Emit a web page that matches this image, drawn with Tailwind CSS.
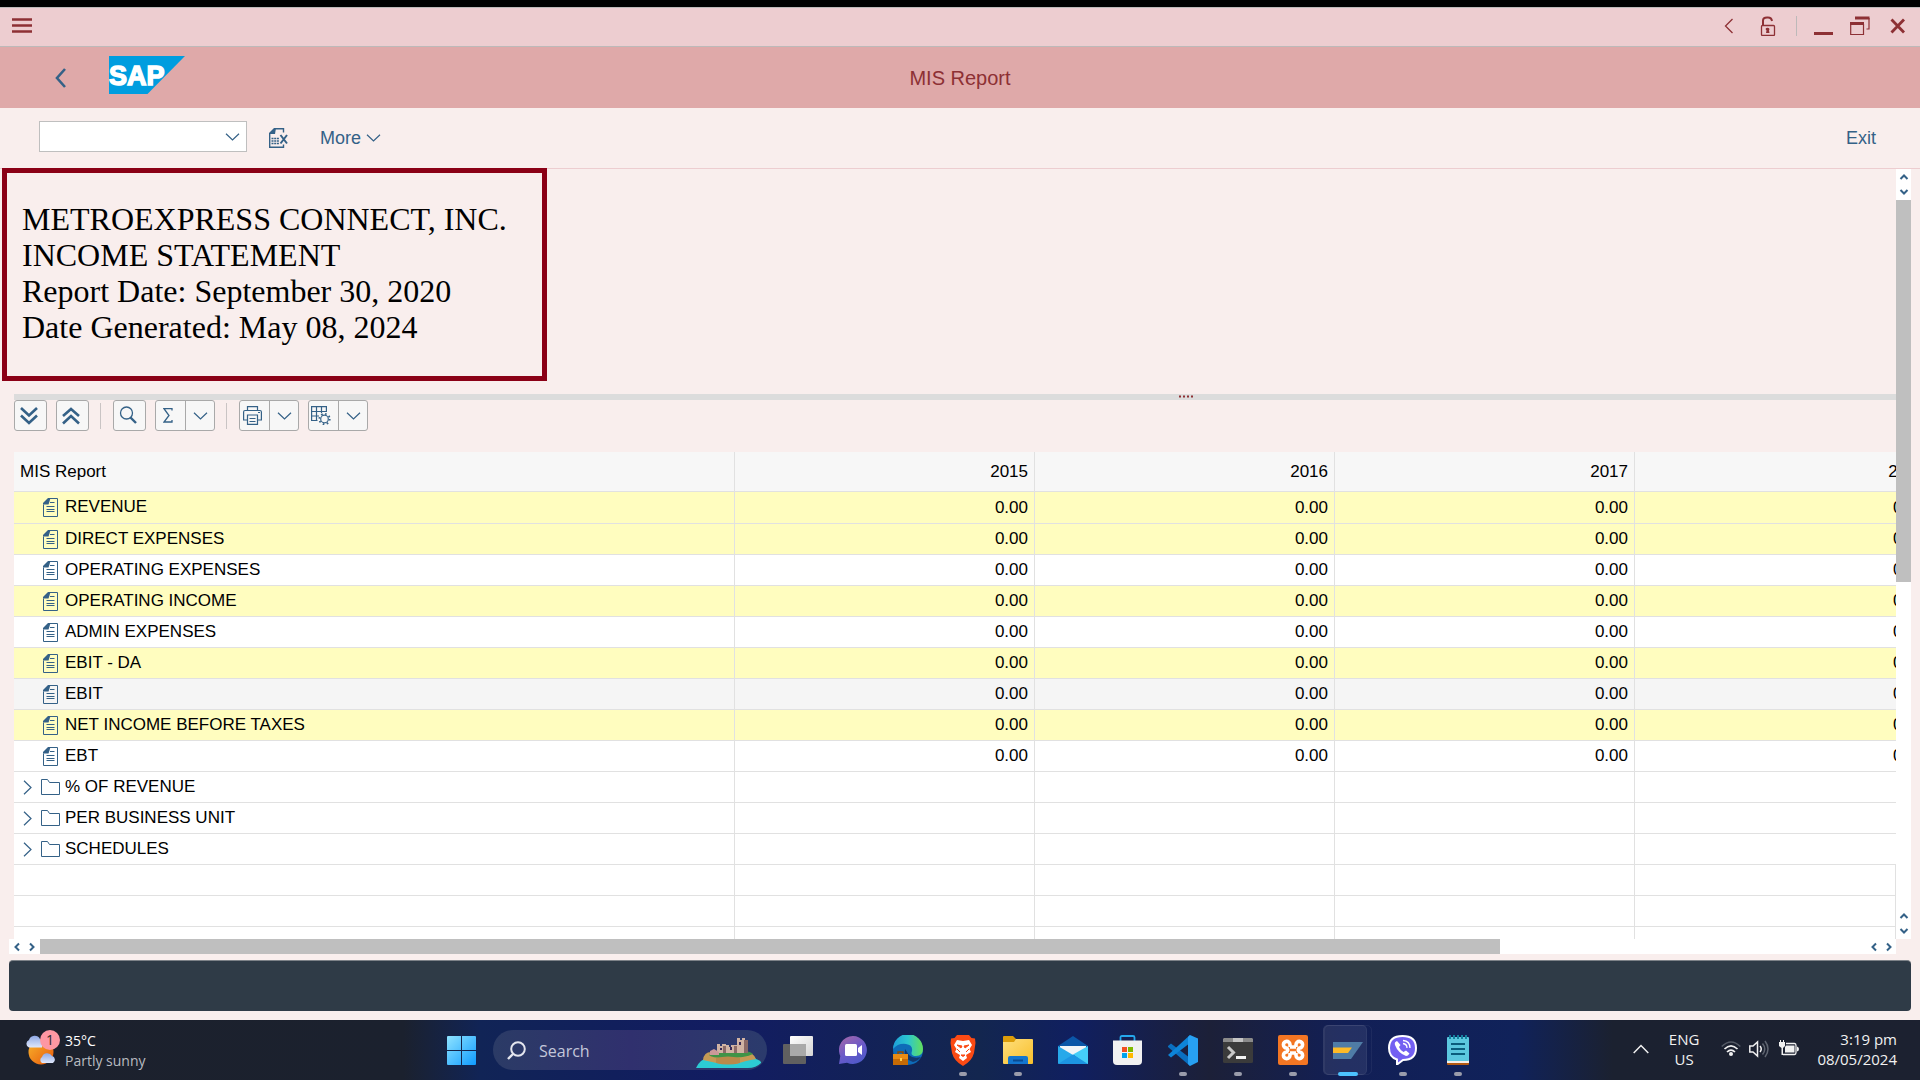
<!DOCTYPE html>
<html lang="en">
<head>
<meta charset="utf-8">
<title>MIS Report</title>
<script src="https://cdn.jsdelivr.net/npm/@tailwindcss/browser@4"></script>
</head>
<body class="flex h-screen flex-col overflow-hidden bg-[#f9eeed] font-['Liberation_Sans',Arial,sans-serif] text-[17px] text-black">

<svg class="hidden">
  <symbol id="doc" viewBox="0 0 15 19"><path d="M.5 6.5V18.500h14V.5H6.500" fill="none" stroke="#346187"/><path d="M0 6.500V5L5 0H7.500L6 5L5.500 6.500Z" fill="#346187"/><path d="M7 4.500H11.500M3.500 8.500H11.500M3.500 11.500H11.500M3.500 13.500H11.500" stroke="#346187"/></symbol>
  <symbol id="folder" viewBox="0 0 19 16"><path d="M.5.5H6.500L8.500 3.500H18.500V15.500H.5Z" fill="none" stroke="#346187"/></symbol>
  <symbol id="down" viewBox="0 0 14 8"><path d="M.5 .7L7 7L13.500 .7" fill="none" stroke="currentColor" stroke-width="1.200"/></symbol>
  <symbol id="tiny" viewBox="0 0 10 6"><path d="M1.500 5L5 1.500L8.500 5" fill="none" stroke="#346187" stroke-width="2"/></symbol>
</svg>

<header class="shrink-0">
  <div class="h-[7px] bg-black"></div>
  <div class="flex h-10 items-center justify-between border-y border-[#bdb9b9] bg-[#edcdd0] pr-[14px] pb-[2px] pl-3 text-[#8d3034]">
    <button aria-label="Menu"><svg class="h-4 w-5" viewBox="0 0 20 16"><path d="M0 1.500H20M0 7.500H20M0 13.500H20" stroke="currentColor" stroke-width="2.400"/></svg></button>
    <div class="flex items-center">
      <button aria-label="Previous" class="mr-[26px]"><svg class="h-4 w-[10px]" viewBox="0 0 10 16"><path d="M8.500 1L1.500 8L8.500 15" fill="none" stroke="currentColor" stroke-width="1.300"/></svg></button>
      <button aria-label="Unlock" class="mr-5"><svg class="h-5 w-4" viewBox="0 0 16 20"><path d="M3 10V4.500Q3 1.500 7 1.500H8Q11.500 1.500 12 5" fill="none" stroke="currentColor" stroke-width="2"/><rect x="1.500" y="9.500" width="13" height="10" rx="1" fill="none" stroke="currentColor" stroke-width="1.300"/><path d="M5.500 13A2.200 2.200 0 0 1 9.500 13L9 14.500L9.500 17H6L6.500 14.500Z" fill="currentColor"/></svg></button>
      <span class="mr-[17px] h-5 w-px bg-[#bdb9b9]"></span>
      <button aria-label="Minimize" class="mr-[17px]"><svg class="h-5 w-[19px]" viewBox="0 0 19 20"><path d="M0 17.500H19" stroke="currentColor" stroke-width="3"/></svg></button>
      <button aria-label="Restore" class="mr-5"><svg class="h-5 w-[20px]" viewBox="0 0 20 20"><path d="M.7 8V18.500H13.500V8M19 2V13H16.500" fill="none" stroke="currentColor" stroke-width="1.200"/><path d="M0 7.500H14M5 2H19.500" stroke="currentColor" stroke-width="3"/></svg></button>
      <button aria-label="Close"><svg class="h-4 w-4" viewBox="0 0 16 16"><path d="M1.500 1.500L14 14.500M14 1.500L1.500 14.500" stroke="currentColor" stroke-width="2.800"/></svg></button>
    </div>
  </div>
  <div class="grid h-[61px] grid-cols-[1fr_auto_1fr] items-center bg-[#dfa9a9] px-[55px]">
    <div class="-mt-1 flex items-center gap-[42px]">
      <button aria-label="Back" class="pt-1"><svg class="h-5 w-3" viewBox="0 0 12 20"><path d="M10 1L2 10L10 19" fill="none" stroke="#346187" stroke-width="2.600"/></svg></button>
      <svg class="-mt-[2px] h-[38px] w-[76px]" viewBox="0 0 76 38" role="img" aria-label="SAP"><path d="M0 0H76L38.500 38H0Z" fill="#009ddf"/><text x="0" y="29" font-family="Liberation Sans" font-weight="700" font-size="27" fill="#fff" stroke="#fff" stroke-width="1.500">SAP</text></svg>
    </div>
    <h1 class="text-[20px] text-[#8d3034]">MIS Report</h1>
  </div>
  <div class="flex h-[61px] items-center border-b border-[#edcdd0] pr-11 pl-[39px] text-[18px] text-[#346187]">
    <div class="relative mb-[3px]">
      <select aria-label="Command" class="block h-[31px] w-[208px] appearance-none border border-[#bfbfbf] bg-white"><option></option></select>
      <svg class="pointer-events-none absolute top-3 right-[7px] h-2 w-[15px]"><use href="#down"/></svg>
    </div>
    <button aria-label="Export to spreadsheet" class="ml-[22px]"><svg class="h-5 w-[19px]" viewBox="0 0 19 20"><path d="M.7 6V19.200H14.500V16.500M6 .7H14.500V4.500" fill="none" stroke="#346187" stroke-width="1.400"/><path d="M0 6V5L5 0H7L6 6Z" fill="#346187"/><path d="M2.500 10.500H10M2.500 13H10M2.500 15.500H10" stroke="#346187" stroke-width="1.500" stroke-dasharray="2 .7"/><path d="M11.500 7L18 15.500M18 7L11.500 15.500" stroke="#346187" stroke-width="2"/></svg></button>
    <button class="ml-8 flex items-center gap-[5px]">More <svg class="h-2 w-[15px]"><use href="#down"/></svg></button>
    <button class="ml-auto">Exit</button>
  </div>
</header>

<main class="flex min-h-0 flex-1 flex-col px-[9px] pb-[9px]">
  <div class="flex min-h-0 flex-1">
    <div class="flex min-w-0 flex-1 flex-col">
      <div class="flex min-h-0 flex-1 flex-col pl-[5px]">
        <section class="-mt-px -ml-3 h-[213px] w-[545px] shrink-0 border-[5px] border-[#8b0016] pt-7 pl-[15px] font-['Liberation_Serif',serif] text-[32px] leading-[36px] whitespace-nowrap">
          <p>METROEXPRESS CONNECT, INC.</p>
          <p>INCOME STATEMENT</p>
          <p>Report Date: September 30, 2020</p>
          <p>Date Generated: May 08, 2024</p>
        </section>
        <div class="mt-[13px] flex h-[6px] shrink-0 items-start justify-center bg-[#dcdcdc] pt-px pl-[464px]">
          <svg class="h-[3px] w-4" viewBox="0 0 16 3"><path d="M0 1.500H16" stroke="#8d3034" stroke-width="2" stroke-dasharray="2"/></svg>
        </div>
        <div class="flex h-[31px] shrink-0 items-center text-[#346187]">
          <button aria-label="Expand all" class="grid h-[31px] w-[33px] place-items-center rounded-[3px] border border-[#a9a9a9] bg-[#f7f7f7] pr-[3px]"><svg class="h-[18px] w-[18px]" viewBox="0 0 18 18"><path d="M1 1L9 8.500L17 1M1 8.500L9 16L17 8.500" fill="none" stroke="currentColor" stroke-width="2.600"/></svg></button>
          <button aria-label="Collapse all" class="ml-[9px] grid h-[31px] w-[33px] place-items-center rounded-[3px] border border-[#a9a9a9] bg-[#f7f7f7] pr-[3px]"><svg class="h-[18px] w-[18px]" viewBox="0 0 18 18"><path d="M1 9L9 2L17 9M1 16.500L9 9L17 16.500" fill="none" stroke="currentColor" stroke-width="2.600"/></svg></button>
          <span class="mr-3 ml-[11px] h-[26px] w-px bg-[#c9c4c4]"></span>
          <button aria-label="Find" class="grid h-[31px] w-[33px] place-items-center rounded-[3px] border border-[#a9a9a9] bg-[#f7f7f7] pr-[3px] pb-[2px]"><svg class="h-[18px] w-[18px]" viewBox="0 0 18 18"><circle cx="7.500" cy="7" r="6" fill="none" stroke="currentColor" stroke-width="1.300"/><path d="M11.500 11.500L17 17" stroke="currentColor" stroke-width="2.400"/></svg></button>
          <div class="ml-[9px] flex h-[31px] w-[60px] rounded-[3px] border border-[#a9a9a9] bg-[#f7f7f7]">
            <button aria-label="Total" class="grid w-[30px] place-items-center border-r border-[#a9a9a9] pr-[5px]"><svg class="h-[15px] w-[10px]" viewBox="0 0 10 15"><path d="M9 2.500V.7H1L6 7.500L1 14H9V12" fill="none" stroke="currentColor" stroke-width="1.300"/></svg></button>
            <button aria-label="Total options" class="grid flex-1 place-items-center"><svg class="h-2 w-[15px]"><use href="#down"/></svg></button>
          </div>
          <span class="mr-3 ml-[11px] h-[26px] w-px bg-[#c9c4c4]"></span>
          <div class="flex h-[31px] w-[60px] rounded-[3px] border border-[#a9a9a9] bg-[#f7f7f7]">
            <button aria-label="Print" class="grid w-[30px] place-items-center border-r border-[#a9a9a9] pr-[5px]"><svg class="h-[19px] w-[19px]" viewBox="0 0 19 19" fill="none" stroke="currentColor" stroke-width="1.200"><path d="M4.500 4.500V.6H14.500V4.500M4 14H.6V6Q.6 4.500 2 4.500H17Q18.400 4.500 18.400 6V14H15"/><path d="M4.500 9H14.500V18.400H4.500ZM6.500 12.500H12.500M6.500 15.500H12.500M15 6.500H17"/></svg></button>
            <button aria-label="Print options" class="grid flex-1 place-items-center"><svg class="h-2 w-[15px]"><use href="#down"/></svg></button>
          </div>
          <div class="ml-[9px] flex h-[31px] w-[60px] rounded-[3px] border border-[#a9a9a9] bg-[#f7f7f7]">
            <button aria-label="Layout" class="grid w-[30px] place-items-center border-r border-[#a9a9a9] pr-[5px]"><svg class="h-[19px] w-[20px]" viewBox="0 0 20 19" fill="none" stroke="currentColor" stroke-width="1.200"><path d="M6.500 14.500H.6V.6H15.400V6M.6 5.500H15.400M.6 10H8M5.500 .6V14.500M10.500 .6V7"/><circle cx="13.500" cy="13" r="3.800"/><circle cx="13.500" cy="13" r="5.200" stroke-width="1.800" stroke-dasharray="1.600 2.480"/></svg></button>
            <button aria-label="Layout options" class="grid flex-1 place-items-center"><svg class="h-2 w-[15px]"><use href="#down"/></svg></button>
          </div>
        </div>
        <div class="mt-[21px] min-h-0 flex-1 overflow-hidden bg-white">
          <table class="w-[1921px] table-fixed border-separate border-spacing-0">
            <colgroup><col class="w-[721px]"><col class="w-[300px]"><col class="w-[300px]"><col class="w-[300px]"><col class="w-[300px]"></colgroup>
            <thead id="head" class="bg-[#f7f7f7]"></thead>
            <tbody id="rows"></tbody>
          </table>
          <div id="blank"></div>
        </div>
      </div>
      <div class="flex h-[15px] shrink-0 items-center bg-white">
        <div class="flex w-[31px] justify-around">
          <svg class="h-[6px] w-[10px] -rotate-90"><use href="#tiny"/></svg><svg class="h-[6px] w-[10px] rotate-90"><use href="#tiny"/></svg>
        </div>
        <div class="flex-1"><div class="h-[15px] w-[80%] bg-[#bfbfbf]"></div></div>
        <div class="flex w-[31px] justify-around pl-px">
          <svg class="h-[6px] w-[10px] -rotate-90"><use href="#tiny"/></svg><svg class="h-[6px] w-[10px] rotate-90"><use href="#tiny"/></svg>
        </div>
      </div>
    </div>
    <div class="mb-[15px] flex w-[15px] flex-col items-center bg-white">
      <div class="flex h-[31px] flex-col items-center justify-around">
        <svg class="h-[6px] w-[10px]"><use href="#tiny"/></svg><svg class="h-[6px] w-[10px] rotate-180"><use href="#tiny"/></svg>
      </div>
      <div class="w-full flex-1"><div class="h-[54%] bg-[#bfbfbf]"></div></div>
      <div class="flex h-[31px] flex-col items-center justify-around">
        <svg class="h-[6px] w-[10px]"><use href="#tiny"/></svg><svg class="h-[6px] w-[10px] rotate-180"><use href="#tiny"/></svg>
      </div>
    </div>
  </div>
  <div role="status" class="mt-[6px] h-[51px] shrink-0 rounded-[4px] border-t border-[#7d8288] bg-[#2f3b47]"></div>
</main>

<footer class="grid h-[60px] shrink-0 grid-cols-[1fr_auto_1fr] items-center bg-[linear-gradient(90deg,#1c212d_0%,#1b212e_21%,#112456_25%,#111f5c_32%,#121c62_38%,#13264f_51%,#101f60_56%,#1c2038_63%,#121f56_70%,#10225a_79%,#1b2130_84%,#1c2130_100%)] font-['Open_Sans',sans-serif] text-[15px] leading-5 text-white">
  <button class="flex items-center gap-1 pl-[26px] text-left text-[14px]">
    <svg class="-mt-1 h-9 w-[35px]" viewBox="0 0 35 36">
      <defs><linearGradient id="sun" x2="1" y2="1"><stop stop-color="#f8b52c"/><stop offset="1" stop-color="#e8590c"/></linearGradient><linearGradient id="cl" x2="0" y2="1"><stop stop-color="#8fa9e6"/><stop offset="1" stop-color="#dfe8fb"/></linearGradient></defs>
      <circle cx="15" cy="22" r="12.500" fill="url(#sun)"/><path d="M3 17.500A4 4 0 0 1 3 10A6 6 0 0 1 14 9Q17 12 16 17.500Z" fill="url(#cl)"/><path d="M16 33A3.500 3.500 0 0 1 16 27A5.500 5.500 0 0 1 26 26A3.800 3.800 0 0 1 27 33Z" fill="url(#cl)"/>
      <circle cx="24" cy="10" r="10" fill="#fd97a3"/><text x="20" y="15" font-size="14" font-family="Open Sans" fill="#2b2b2b">1</text>
    </svg>
    <span class="pt-px">35°C<br><span class="text-[#b9bcc1]">Partly sunny</span></span>
  </button>

  <div class="flex items-center">
    <button aria-label="Start" class="grid h-[52px] w-[55px] place-items-center pr-[2px]"><svg class="h-[29px] w-[29px]" viewBox="0 0 29 29"><defs><linearGradient id="win" x2="1" y2="1"><stop stop-color="#8fe3ff"/><stop offset="1" stop-color="#0f9bff"/></linearGradient></defs><path d="M0 1Q0 0 1 0H14V14H0ZM15 0H28Q29 0 29 1V14H15ZM0 15H14V29H1Q0 29 0 28ZM15 15H29V28Q29 29 28 29H15Z" fill="url(#win)"/></svg></button>
    <div class="relative mx-[3px] h-10 w-[274px] overflow-hidden rounded-full bg-linear-to-r from-[#2b3b66] via-[#30306e] to-[#2b3b6c]">
      <svg class="absolute top-[11px] left-[14px] h-[19px] w-[19px]" viewBox="0 0 19 19"><circle cx="11" cy="8" r="6.800" fill="none" stroke="#e4e6ee" stroke-width="2"/><path d="M6 13L1 18" stroke="#e4e6ee" stroke-width="2.400"/></svg>
      <input type="text" aria-label="Search" placeholder="Search" class="block h-10 w-full bg-transparent pt-px pl-[46px] text-[16px] text-white placeholder-[#c3c7da]">
      <svg class="pointer-events-none absolute top-2 right-[6px] h-[30px] w-[65px]" viewBox="0 0 65 30"><path d="M0 30Q4 21 12 20H58Q66 23 65 25Q60 30 52 30Z" fill="#2ccbd3"/><path d="M7 22Q8 14 15 14H50Q58 15 60 21L50 23L40 26H25Z" fill="#c59a55"/><path d="M13 17Q20 13 35 13Q52 11 57 16Q50 20 30 20Q15 20 13 17Z" fill="#3f9447"/><path d="M20 20Q32 17 44 20V25Q32 28 20 25Z" fill="#b98a4a"/><path d="M21 6H24V8H26V6H30V15H21ZM30 7H33V9H35V7H41V15H30ZM41 0H44V2H46V0H49V2H52V15H41Z" fill="#d1b3a3"/><path d="M27 8H30V15H27ZM38 8H41V15H38ZM48 2H52V15H48Z" fill="#8c6a67"/><path d="M14 13L18 11L23 14V17H14Z" fill="#c99"/><path d="M43 4H45V7H43ZM34 9H36V12H34ZM24 10H26V12H24Z" fill="#3b2b57"/></svg>
    </div>
    <button aria-label="Task view" class="grid h-[52px] w-[55px] place-items-center"><svg class="h-[28px] w-[30px]" viewBox="0 0 30 28"><defs><linearGradient id="tv" x2="1" y2="1"><stop stop-color="#fff"/><stop offset="1" stop-color="#d4d4d4"/></linearGradient></defs><rect y="8" width="23" height="20" rx="1" fill="#606060"/><rect x="7" width="23" height="20" rx="1" fill="url(#tv)"/><path d="M7 8H23V20H7Z" fill="#a9a9a9"/></svg></button>
    <button aria-label="Chat" class="grid h-[52px] w-[55px] place-items-center"><svg class="h-[28px] w-[28px]" viewBox="0 0 28 28"><defs><linearGradient id="ch" x2=".6" y2="1"><stop stop-color="#a968a6"/><stop offset=".6" stop-color="#6a5ac9"/><stop offset="1" stop-color="#5059c9"/></linearGradient></defs><path d="M14 0A14 14 0 1 1 8 26.700L0 28L1.300 20A14 14 0 0 1 14 0Z" fill="url(#ch)"/><rect x="6" y="8" width="12" height="12" rx="1.500" fill="#fff"/><path d="M19 12L23 9V19L19 16Z" fill="#fff"/></svg></button>
    <button aria-label="Edge" class="grid h-[52px] w-[55px] place-items-center"><svg class="h-[30px] w-[30px]" viewBox="0 0 30 30"><defs><linearGradient id="ed"><stop stop-color="#1d9ed9"/><stop offset=".5" stop-color="#2cc6cf"/><stop offset="1" stop-color="#64e05a"/></linearGradient></defs><circle cx="15" cy="15" r="15" fill="#0e6bb8"/><path d="M0 14A15 15 0 0 1 30 14Q30 21 23 21Q17 21 19 16Q20 10 13 9Q5 8 0 14Z" fill="url(#ed)"/><path d="M12 14Q10 24 20 27Q25 26 28 22Q20 24 16 20Z" fill="#12386e"/><rect y="19" width="15" height="11" fill="#c66a05"/><path d="M0 19H15V24H0Z" fill="#e88b14"/><path d="M5 19V17H10V19" fill="none" stroke="#8d4a06" stroke-width="1.500"/><path d="M7 23H9V26H7Z" fill="#ffd04d"/></svg></button>
    <button aria-label="Brave" class="relative grid h-[52px] w-[55px] place-items-center"><svg class="h-[31px] w-[26px]" viewBox="0 0 26 31"><path d="M7 0H19L21.500 3L25 3.500L25.500 8L24 18Q22 26 13 31Q4 26 2 18L.5 8L1 3.500L4.500 3Z" fill="#fb4a14"/><path d="M7 5L13 6L19 5L22 10L19.500 14L21 17L16 20L17 23L13 26L9 23L10 20L5 17L6.500 14L4 10Z" fill="#fff"/><path d="M7 10L12 11L11 13ZM19 10L14 11L15 13ZM11 20H15L13 21.500ZM7 14L10 17M19 14L16 17" fill="#fb4a14" stroke="#fb4a14"/></svg><span class="absolute bottom-0 h-1 w-2 rounded-full bg-[#9a9cab]"></span></button>
    <button aria-label="File Explorer" class="relative grid h-[52px] w-[55px] place-items-center"><svg class="h-[30px] w-[30px]" viewBox="0 0 30 30"><defs><linearGradient id="fe" x2="1" y2="1"><stop stop-color="#ffdf7c"/><stop offset="1" stop-color="#f8bf2c"/></linearGradient></defs><path d="M0 2Q0 1 1 1H10L13 4V10H0Z" fill="#dc9d0a"/><path d="M0 7H11L13 4H29Q30 4 30 5V28Q30 29 29 29H1Q0 29 0 28Z" fill="url(#fe)"/><path d="M5 29V23Q5 21 7 21H23Q25 21 25 23V29Z" fill="#1476cf"/><path d="M10 25.500H20" stroke="#0a4b92" stroke-width="2"/></svg><span class="absolute bottom-0 h-1 w-2 rounded-full bg-[#9a9cab]"></span></button>
    <button aria-label="Mail" class="grid h-[52px] w-[55px] place-items-center"><svg class="h-[30px] w-[30px]" viewBox="0 0 30 30"><path d="M0 11L15 1L30 11V15H0Z" fill="#0b57a8"/><path d="M2 11H28V20H2Z" fill="#f2f5f8"/><path d="M0 11L30 29H1Q0 29 0 28Z" fill="#27a9ea"/><path d="M30 11V29H28L15 19.500Z" fill="#45cdf8"/><path d="M15 19.500L30 29H0Z" fill="#1d95e3"/></svg></button>
    <button aria-label="Microsoft Store" class="grid h-[52px] w-[55px] place-items-center"><svg class="h-[30px] w-[29px]" viewBox="0 0 29 30"><path d="M7.500 7V2.500Q7.500 1 9 1H20Q21.500 1 21.500 2.500V7" fill="none" stroke="#25a8ec" stroke-width="1.800"/><path d="M0 5.500H29V26Q29 30 25 30H4Q0 30 0 26Z" fill="#f1f1f1"/><path d="M9 12H14V17H9Z" fill="#f25022"/><path d="M15 12H20V17H15Z" fill="#7fba00"/><path d="M9 18H14V23H9Z" fill="#00a4ef"/><path d="M15 18H20V23H15Z" fill="#ffb900"/></svg></button>
    <button aria-label="Visual Studio Code" class="relative grid h-[52px] w-[55px] place-items-center"><svg class="h-[31px] w-[30px]" viewBox="0 0 30 31"><path d="M0 11L3 8.500L22 23V31L0 12Z" fill="#0a6fc0"/><path d="M0 20L22 0V8L3 22.500Z" fill="#0d84d8"/><path d="M22 0L30 3.500V27L22 31L20 29V2Z" fill="#27a0f2"/></svg><span class="absolute bottom-0 h-1 w-2 rounded-full bg-[#9a9cab]"></span></button>
    <button aria-label="Terminal" class="relative grid h-[52px] w-[55px] place-items-center"><svg class="h-[25px] w-[30px]" viewBox="0 0 30 25"><rect width="30" height="25" rx="1.500" fill="#3b3b3b"/><path d="M1 0H10V4H0V1ZM20 0H29L30 1V4H20Z" fill="#8a8a8a"/><path d="M10 0H20V4H10Z" fill="#c4c4c4"/><path d="M5 9L10.500 14.500L5 20" fill="none" stroke="#c8c8c8" stroke-width="3"/><path d="M13 19.500H23" stroke="#f2f2f2" stroke-width="3"/></svg><span class="absolute bottom-0 h-1 w-2 rounded-full bg-[#9a9cab]"></span></button>
    <button aria-label="XAMPP" class="relative grid h-[52px] w-[55px] place-items-center"><svg class="h-[30px] w-[30px]" viewBox="0 0 30 30"><rect width="30" height="30" rx="2" fill="#f37623"/><path d="M12 12H18M12 18H18M12 12V9.500A3.300 3.300 0 1 0 8.500 13Q11 15 8.500 17A3.300 3.300 0 1 0 12 20.500V18M18 12V9.500A3.300 3.300 0 1 1 21.500 13Q19 15 21.500 17A3.300 3.300 0 1 1 18 20.500V18" fill="none" stroke="#fff" stroke-width="3.600" stroke-linejoin="round"/></svg><span class="absolute bottom-0 h-1 w-2 rounded-full bg-[#9a9cab]"></span></button>
    <button aria-label="SAP Logon" class="relative grid h-[52px] w-[55px] place-items-center"><span class="absolute top-px left-1 h-[50px] w-[48px] rounded-[5px] border border-white/5"></span><span class="absolute top-px left-[3px] h-[50px] w-[44px] rounded-[5px] border border-white/5 bg-white/8"></span><svg class="h-[17px] w-[30px]" viewBox="0 0 30 17"><path d="M0 0H30L18 17H0Z" fill="#41719f"/><path d="M0 5.500H19L15 11H0Z" fill="#fdb515"/></svg><span class="absolute bottom-0 h-1 w-5 rounded-full bg-[#4cc2ff]"></span></button>
    <button aria-label="Viber" class="relative grid h-[52px] w-[55px] place-items-center"><svg class="h-[30px] w-[29px]" viewBox="0 0 29 30"><path d="M14.500 1Q28 1 28 13Q28 25 15 25L9 29.500V24.500Q1 22 1 13Q1 1 14.500 1Z" fill="#7360f2" stroke="#fff" stroke-width="2"/><path d="M9 6Q6 7 7 10Q10 18 18 21Q20 21 21.500 18.500L18 15.500L15.500 17Q12 15 11 12L12.500 10Z" fill="#fff"/><path d="M15 5.500Q22 6 22 13M15 8.500Q19 9 19 13" fill="none" stroke="#fff" stroke-width="1.300"/></svg><span class="absolute bottom-0 h-1 w-2 rounded-full bg-[#9a9cab]"></span></button>
    <button aria-label="Notepad" class="relative grid h-[52px] w-[55px] place-items-center"><svg class="h-[30px] w-[22px]" viewBox="0 0 22 30"><path d="M0 26H22V29Q22 30 21 30H1Q0 30 0 29Z" fill="#b35a12"/><path d="M0 25H22V28H0Z" fill="#f4efe9"/><rect y="2" width="22" height="24" rx="1" fill="#5cc8df"/><path d="M4 9H18M4 14H18M4 19H18" stroke="#0b5d7c" stroke-width="2"/><path d="M3 0V4M7 0V4M11 0V4M15 0V4M19 0V4" stroke="#15809e" stroke-width="2"/></svg><span class="absolute bottom-0 h-1 w-2 rounded-full bg-[#9a9cab]"></span></button>
  </div>

  <div class="flex items-center justify-end pr-[23px] pb-[2px] text-[15px] text-[#f1f1f1]">
    <button aria-label="Show hidden icons" class="mr-5"><svg class="h-[10px] w-4" viewBox="0 0 16 10"><path d="M.7 9L8 1.500L15.300 9" fill="none" stroke="currentColor" stroke-width="1.500"/></svg></button>
    <button class="mr-[22px] text-center">ENG<br>US</button>
    <svg class="mr-2 h-5 w-5" viewBox="0 0 20 20" fill="none" stroke="currentColor"><path d="M.7 7.500Q10-1.500 19.300 7.500" stroke="#555b66" stroke-width="1.500"/><path d="M3.500 10Q10 3.500 16.500 10M6 13Q10 9 14 13" stroke-width="1.700"/><circle cx="10" cy="15" r="2" fill="currentColor" stroke="none"/></svg>
    <svg class="mr-[10px] h-5 w-5" viewBox="0 0 20 20" fill="none" stroke="currentColor" stroke-width="1.500"><path d="M.8 7H4L8.500 3V17L4 13H.8Z"/><path d="M11 7Q13.500 10 11 13"/><path d="M13.500 4.500Q18 10 13.500 15.500M16 2Q22 10 16 18" stroke="#5f6570"/></svg>
    <svg class="mr-[18px] h-5 w-5" viewBox="0 0 20 20"><path d="M0 3H1V1H2V3H4V1H5V3H6V7L4 9V16H2.500V9L0 7Z" fill="currentColor"/><path d="M7 4.500H15.500Q17 4.500 17 6.500V13.500Q17 15.500 15.500 15.500H4" fill="none" stroke="currentColor" stroke-width="1.300"/><path d="M7 6.500H15.500V13.500H6V8ZM18 7.500Q20 8 20 10Q20 12 18 12.500Z" fill="currentColor"/></svg>
    <button class="text-right">3:19 pm<br>08/05/2024</button>
  </div>
</footer>

<script>
const years = ['2015', '2016', '2017', '2018'];
const rows = [
  ['REVENUE', 'y'], ['DIRECT EXPENSES', 'y'], ['OPERATING EXPENSES', 'w'], ['OPERATING INCOME', 'y'],
  ['ADMIN EXPENSES', 'w'], ['EBIT - DA', 'y'], ['EBIT', 'g'], ['NET INCOME BEFORE TAXES', 'y'], ['EBT', 'w'],
  ['% OF REVENUE', 'f'], ['PER BUSINESS UNIT', 'f'], ['SCHEDULES', 'f']
];
const bg = { y: 'bg-[#fffdbf]', g: 'bg-[#f5f5f5]', w: 'bg-white', f: 'bg-white' };
const pad = i => i === 3 ? 'pr-2' : 'pr-[6px]';
document.getElementById('head').innerHTML =
  `<tr><th class="h-10 border-r border-b border-[#e1e1e1] p-0 pt-px pl-[6px] text-left font-normal">MIS Report</th>` +
  years.map((y, i) => `<th class="h-10 border-r border-b border-[#e1e1e1] pt-px pl-0 ${pad(i)} text-right font-normal">${y}</th>`).join('') + '</tr>';
document.getElementById('rows').innerHTML = rows.map(([name, kind], i) => {
  const h = i === 0 ? 'h-8' : 'h-[31px]';
  const folder = kind === 'f';
  const lead = folder
    ? `<button aria-label="Expand" class="ml-[9px] w-[9px] text-[#346187]"><svg class="h-[15px] w-[9px]" viewBox="0 0 9 15"><path d="M1 .7L8 7.500L1 14.300" fill="none" stroke="currentColor" stroke-width="1.200"/></svg></button><svg class="mr-[5px] ml-[9px] h-4 w-[19px]"><use href="#folder"/></svg>`
    : `<svg class="mr-[7px] ml-[29px] h-[19px] w-[15px]"><use href="#doc"/></svg>`;
  return `<tr class="${bg[kind]}"><td class="${h} border-r border-b border-[#e1e1e1] p-0"><div class="flex items-center leading-[28px]">${lead}<span class="-mt-px">${name}</span></div></td>` +
    years.map((y, c) => `<td class="${h} border-r border-b border-[#e1e1e1] py-0 pl-0 ${pad(c)} text-right leading-[28px]">${folder ? '' : '0.00'}</td>`).join('') + '</tr>';
}).join('');
document.getElementById('blank').innerHTML = [1, 2, 3].map(() =>
  `<div class="grid h-[31px] grid-cols-[721px_300px_300px_300px_1fr] divide-x divide-[#e1e1e1] border-r border-b border-[#e1e1e1]"><i></i><i></i><i></i><i></i><i></i></div>`).join('');
</script>
</body>
</html>
